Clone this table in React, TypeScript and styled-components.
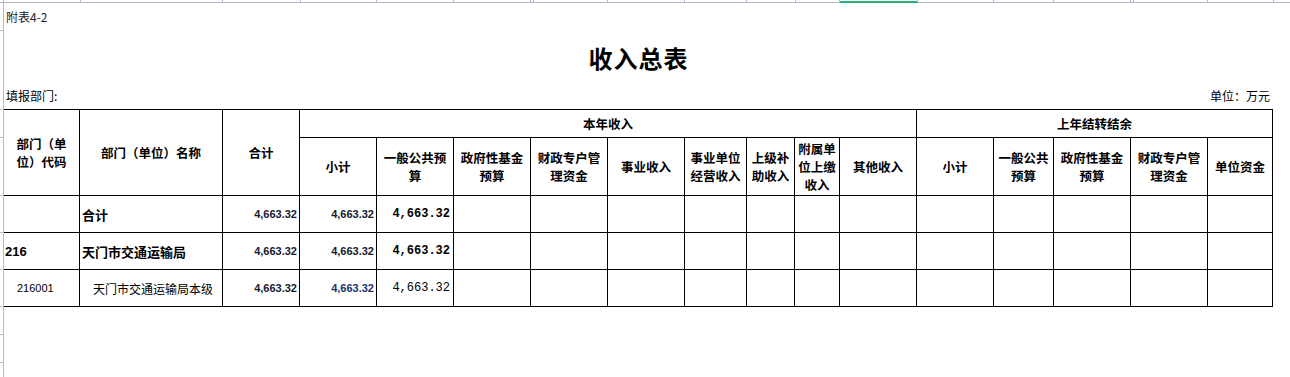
import React from 'react'
import styled, { createGlobalStyle } from 'styled-components'

const RULER = '#b1b8c9'
const LINE = '#000'

const GlobalStyle = createGlobalStyle`
  html, body {
    margin: 0;
    padding: 0;
    background: #fff;
  }
  body {
    font-family: 'Noto Sans CJK SC', 'Noto Sans', sans-serif;
    color: #000;
  }
`

const Sheet = styled.div`
  display: grid;
  grid-template-columns: 4px 1fr;
  grid-template-rows: 3px 1fr;
  width: 1290px;
  height: 377px;
  overflow: hidden;
`

const Corner = styled.div`
  box-sizing: border-box;
  border-right: 1px solid ${RULER};
  border-bottom: 1px solid ${RULER};
`

const TopRuler = styled.div`
  display: flex;
  height: 3px;
`

const TopTick = styled.div<{ $width?: number; $active?: boolean }>`
  box-sizing: border-box;
  flex: ${({ $width }) => ($width ? `0 0 ${$width}px` : '1 1 auto')};
  height: 3px;
  border-right: ${({ $width }) => ($width ? `1px solid ${RULER}` : 'none')};
  border-bottom: ${({ $active }) =>
    $active ? '2px solid #27b37a' : `1px solid ${RULER}`};
`

const LeftRuler = styled.div`
  display: flex;
  flex-direction: column;
  box-sizing: border-box;
  border-right: 1px solid ${RULER};
`

const LeftTick = styled.div<{ $height?: number }>`
  box-sizing: border-box;
  flex: ${({ $height }) => ($height ? `0 0 ${$height}px` : '1 1 auto')};
  border-bottom: ${({ $height }) => ($height ? `1px solid ${RULER}` : 'none')};
`

const Content = styled.div`
  display: flex;
  flex-direction: column;
  width: 1269px;
`

const Caption = styled.div`
  height: 27px;
  line-height: 27px;
  padding-left: 2px;
  font-size: 12px;
  color: #222;
`

const Title = styled.h1`
  display: flex;
  align-items: center;
  justify-content: center;
  height: 54px;
  margin: 0;
  font-size: 24px;
  font-weight: 700;
  letter-spacing: 1px;
`

const InfoBar = styled.div`
  display: flex;
  justify-content: space-between;
  align-items: center;
  box-sizing: border-box;
  height: 25px;
  padding: 0 3px 2px 2px;
  font-size: 12px;
`

const Grid = styled.div`
  display: grid;
  grid-template-columns: 76px 143px 77px 77px 77px 77px 77px 77px 62px 48px 45px 77px 77px 60px 77px 77px 65px;
  grid-template-rows: 28px 58px 37px 37px 37px;
  border-top: 1px solid ${LINE};
`

const Cell = styled.div<{
  $col: number
  $row: number
  $colSpan?: number
  $rowSpan?: number
}>`
  grid-column: ${({ $col, $colSpan }) => `${$col} / span ${$colSpan ?? 1}`};
  grid-row: ${({ $row, $rowSpan }) => `${$row} / span ${$rowSpan ?? 1}`};
  box-sizing: border-box;
  display: flex;
  align-items: center;
  border-right: 1px solid ${LINE};
  border-bottom: 1px solid ${LINE};
  overflow: hidden;
  white-space: nowrap;
`

const HeadCell = styled(Cell)`
  flex-direction: column;
  justify-content: center;
  text-align: center;
  font-size: 12.5px;
  font-weight: 700;
  line-height: 18px;
`

const HeadLine = styled.span`
  display: block;
  height: 18px;
`

const DataCell = styled(Cell)<{ $align?: 'left' | 'right'; $pad?: number }>`
  justify-content: ${({ $align }) => ($align === 'right' ? 'flex-end' : 'flex-start')};
  padding: ${({ $align, $pad }) =>
    $align === 'right' ? `0 ${$pad ?? 2}px 0 0` : `0 0 0 ${$pad ?? 2}px`};
`

const CodeText = styled.span<{ $bold: boolean }>`
  font-family: 'Liberation Sans', Arial, sans-serif;
  font-size: ${({ $bold }) => ($bold ? '13px' : '11px')};
  font-weight: ${({ $bold }) => ($bold ? 700 : 400)};
`

const NameText = styled.span<{ $bold: boolean }>`
  font-size: ${({ $bold }) => ($bold ? '13px' : '12px')};
  font-weight: ${({ $bold }) => ($bold ? 700 : 400)};
`

const Amount = styled.span<{ $navy?: boolean }>`
  font-family: 'Liberation Sans', Arial, sans-serif;
  font-size: 11px;
  font-weight: 700;
  color: ${({ $navy }) => ($navy ? '#1a3470' : '#161a30')};
`

const WideAmount = styled.span<{ $bold: boolean }>`
  font-family: 'Liberation Mono', 'Courier New', monospace;
  font-size: 12px;
  font-weight: ${({ $bold }) => ($bold ? 700 : 400)};
`

const topTicks: Array<{ w?: number; active?: boolean }> = [
  { w: 77 }, { w: 142 }, { w: 78 }, { w: 76 }, { w: 77 }, { w: 77 },
  { w: 3 }, { w: 74 }, { w: 77 }, { w: 62 }, { w: 49 }, { w: 44 },
  { w: 78, active: true }, { w: 76 }, { w: 60 }, { w: 77 }, { w: 3 },
  { w: 74 }, { w: 66 }, {},
]

const leftTicks = [28, 79, 28, 58, 37, 37, 37, 28, 28]

const subHeads: Array<string[]> = [
  ['小计'],
  ['一般公共预', '算'],
  ['政府性基金', '预算'],
  ['财政专户管', '理资金'],
  ['事业收入'],
  ['事业单位', '经营收入'],
  ['上级补', '助收入'],
  ['附属单', '位上缴', '收入'],
  ['其他收入'],
  ['小计'],
  ['一般公共', '预算'],
  ['政府性基金', '预算'],
  ['财政专户管', '理资金'],
  ['单位资金'],
]

interface Row {
  readonly code: string
  readonly name: string
  readonly bold: boolean
  readonly indent: boolean
  readonly total: string
}

const rows: Row[] = [
  { code: '', name: '合计', bold: true, indent: false, total: '4,663.32' },
  { code: '216', name: '天门市交通运输局', bold: true, indent: false, total: '4,663.32' },
  { code: '216001', name: '天门市交通运输局本级', bold: false, indent: true, total: '4,663.32' },
]

const Lines: React.FC<{ lines: string[] }> = ({ lines }) => (
  <>
    {lines.map((line) => (
      <HeadLine key={line}>{line}</HeadLine>
    ))}
  </>
)

export default function App() {
  return (
    <>
      <GlobalStyle />
      <Sheet>
        <Corner />
        <TopRuler>
          {topTicks.map((t, i) => (
            <TopTick key={i} $width={t.w} $active={t.active} />
          ))}
        </TopRuler>
        <LeftRuler>
          {leftTicks.map((h, i) => (
            <LeftTick key={i} $height={h} />
          ))}
          <LeftTick />
        </LeftRuler>
        <Content>
          <Caption>附表4-2</Caption>
          <Title>收入总表</Title>
          <InfoBar>
            <span>填报部门:</span>
            <span>单位：万元</span>
          </InfoBar>
          <Grid>
            <HeadCell $col={1} $row={1} $rowSpan={2}>
              <Lines lines={['部门（单', '位）代码']} />
            </HeadCell>
            <HeadCell $col={2} $row={1} $rowSpan={2}>
              部门（单位）名称
            </HeadCell>
            <HeadCell $col={3} $row={1} $rowSpan={2}>
              合计
            </HeadCell>
            <HeadCell $col={4} $row={1} $colSpan={9}>
              本年收入
            </HeadCell>
            <HeadCell $col={13} $row={1} $colSpan={5}>
              上年结转结余
            </HeadCell>
            {subHeads.map((lines, i) => (
              <HeadCell key={i} $col={4 + i} $row={2}>
                <Lines lines={lines} />
              </HeadCell>
            ))}

            {rows.map((r, ri) => {
              const row = 3 + ri
              return (
                <React.Fragment key={r.name}>
                  <DataCell $col={1} $row={row} $pad={r.indent ? 13 : 1}>
                    <CodeText $bold={r.bold}>{r.code}</CodeText>
                  </DataCell>
                  <DataCell $col={2} $row={row} $pad={r.indent ? 13 : 2}>
                    <NameText $bold={r.bold}>{r.name}</NameText>
                  </DataCell>
                  <DataCell $col={3} $row={row} $align="right" $pad={2}>
                    <Amount>{r.total}</Amount>
                  </DataCell>
                  <DataCell $col={4} $row={row} $align="right" $pad={2}>
                    <Amount $navy={r.indent}>{r.total}</Amount>
                  </DataCell>
                  <DataCell $col={5} $row={row} $align="right" $pad={3}>
                    <WideAmount $bold={r.bold}>{r.total}</WideAmount>
                  </DataCell>
                  {Array.from({ length: 12 }, (_, k) => (
                    <DataCell key={k} $col={6 + k} $row={row} />
                  ))}
                </React.Fragment>
              )
            })}
          </Grid>
        </Content>
      </Sheet>
    </>
  )
}
